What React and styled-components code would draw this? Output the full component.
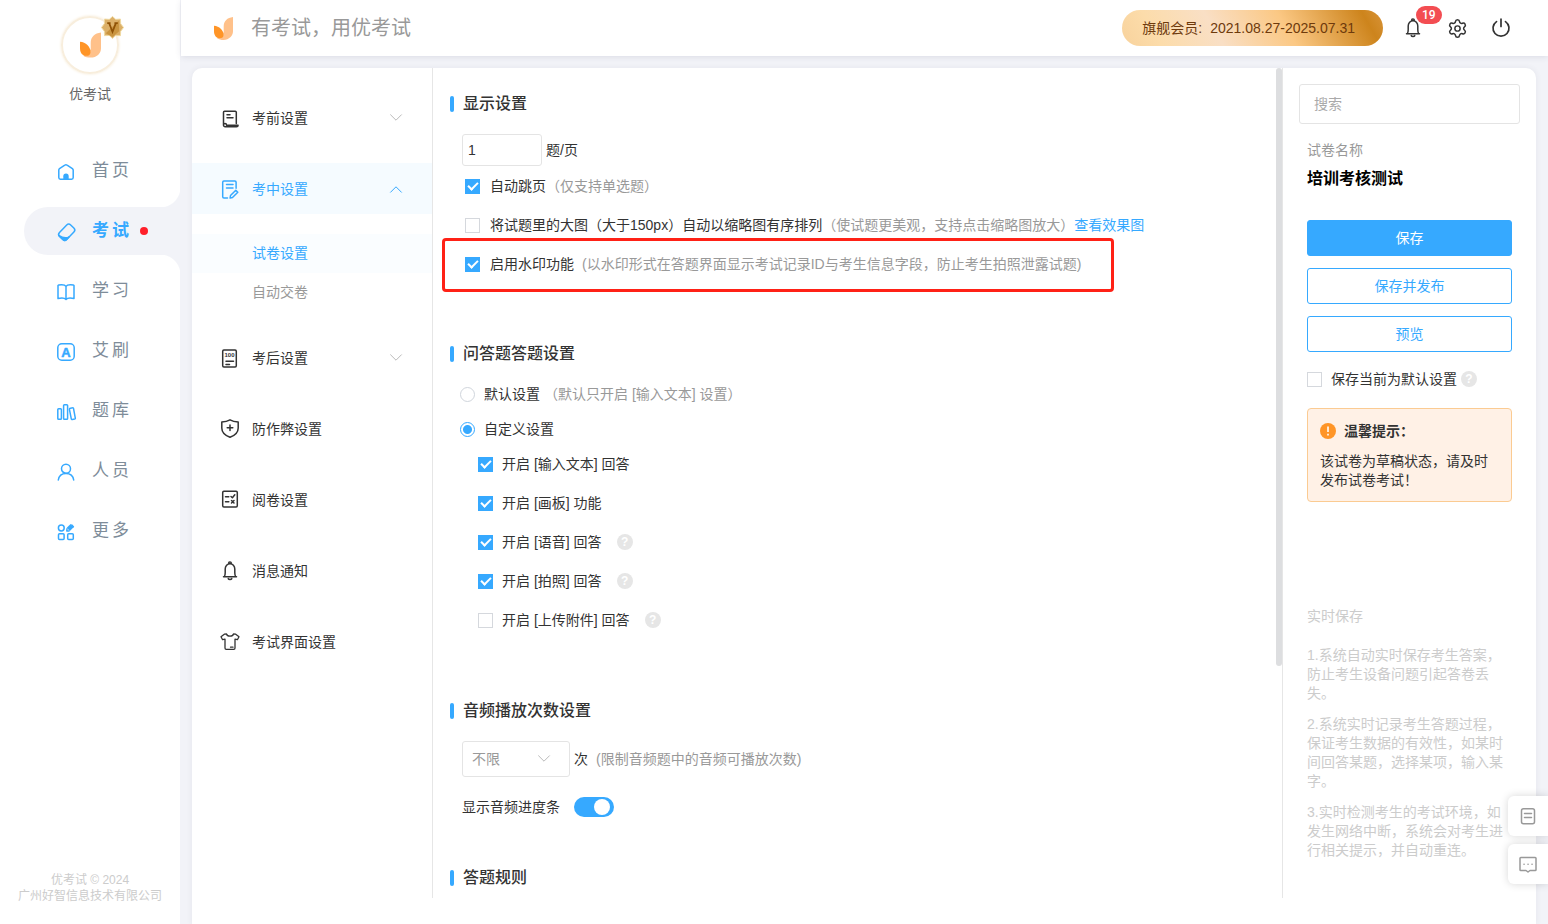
import styled, { createGlobalStyle, css } from 'styled-components';
import { Settings as Gear } from 'lucide-react';

const GlobalStyle = createGlobalStyle`
  * {
    box-sizing: border-box;
  }

  body {
    margin: 0;
    background: #f2f3f8;
    color: #333;
    font-family: 'Liberation Sans', 'Noto Sans CJK SC', sans-serif;
    font-size: 14px;
    line-height: 20px;
  }

  a {
    color: inherit;
    text-decoration: none;
  }

  button,
  input,
  select {
    margin: 0;
    font: inherit;
    color: inherit;
  }

  h1,
  h2,
  h3,
  p {
    margin: 0;
  }

  svg {
    display: block;
    flex-shrink: 0;
    overflow: visible;
  }
`;

const Page = styled.div`
  height: 100vh;
  display: flex;
  overflow: hidden;
`;

const Sidebar = styled.aside`
  width: 180px;
  flex-shrink: 0;
  display: flex;
  flex-direction: column;
  background: #fff;
`;

const Profile = styled.div`
  padding-top: 16px;
  display: flex;
  flex-direction: column;
  align-items: center;
  gap: 10px;
  color: #666;
`;

const Avatar = styled.div`
  width: 58px;
  height: 58px;
  border: 2px solid #f8eedd;
  border-radius: 50%;
  box-shadow: 0 0 2px 1px #fbf5ea;
  display: flex;
  align-items: center;
  justify-content: center;
  position: relative;
`;

const Medal = styled.svg`
  position: absolute;
  top: -2px;
  right: -7px;
`;

const Nav = styled.nav`
  margin-top: 43px;
  display: flex;
  flex-direction: column;
  gap: 12px;
`;

const NavLink = styled.a`
  height: 48px;
  margin-left: 24px;
  padding-left: 33px;
  display: flex;
  align-items: center;
  gap: 15px;
  border-radius: 24px 0 0 24px;
  position: relative;
  color: #7e8c99;
  font-size: 17px;
  letter-spacing: 3px;

  svg {
    color: #36a9ff;
  }

  ${({ $active }) =>
    $active &&
    css`
      background: #f2f3f8;
      color: #36a9ff;
      font-weight: bold;

      &::before,
      &::after {
        content: '';
        position: absolute;
        right: 0;
        width: 20px;
        height: 20px;
      }

      &::before {
        bottom: 100%;
        background: radial-gradient(circle at 0 0, #fff 20px, #f2f3f8 21px);
      }

      &::after {
        top: 100%;
        background: radial-gradient(circle at 0 100%, #fff 20px, #f2f3f8 21px);
      }
    `}
`;

const Dot = styled.i`
  width: 8px;
  height: 8px;
  margin-left: -7px;
  border-radius: 50%;
  background: #ff1f2a;
`;

const Copyright = styled.footer`
  margin-top: auto;
  padding-bottom: 20px;
  text-align: center;
  color: #ccc;
  font-size: 12px;
  line-height: 16px;
`;

const Content = styled.div`
  flex: 1;
  min-width: 0;
  display: flex;
  flex-direction: column;
`;

const Header = styled.header`
  height: 56px;
  margin-left: 1px;
  padding: 0 37px 0 33px;
  flex-shrink: 0;
  display: flex;
  align-items: center;
  background: #fff;
  box-shadow: 0 1px 6px rgba(60, 60, 90, 0.12);
`;

const Slogan = styled.h1`
  margin-left: 18px;
  color: #999;
  font-size: 20px;
  font-weight: normal;
  line-height: 28px;
`;

const Member = styled.div`
  height: 36px;
  margin-left: auto;
  padding: 0 28px 0 20px;
  display: flex;
  align-items: center;
  gap: 8px;
  border-radius: 18px;
  background: linear-gradient(60deg, #f8d29c, #fcdcaa 14%, #f9dfc5 36%, #fbc884 62%, #cd841c 92%, #d8943a);
  color: #6e3a0c;
`;

const HeaderButton = styled.button`
  width: 20px;
  height: 20px;
  margin-left: ${({ $gap }) => $gap || 24}px;
  padding: 0;
  display: flex;
  align-items: center;
  justify-content: center;
  border: 0;
  background: none;
  position: relative;
  color: #333;
  cursor: pointer;
`;

const Badge = styled.span`
  position: absolute;
  left: 13px;
  top: -12px;
  padding: 0 6px;
  border-radius: 9px;
  background: #f34d52;
  color: #fff;
  font-family: Roboto, sans-serif;
  font-size: 12px;
  font-weight: 500;
  line-height: 18px;
`;

const Card = styled.div`
  flex: 1;
  min-height: 0;
  margin: 12px 12px 0 12px;
  padding-bottom: 26px;
  display: flex;
  border-radius: 10px 10px 0 0;
  background: #fff;
  box-shadow: 0 0 6px rgba(60, 60, 90, 0.08);
`;

const Menu = styled.nav`
  width: 241px;
  flex-shrink: 0;
  padding-top: 24px;
  display: flex;
  flex-direction: column;
  gap: 20px;
  border-right: 1px solid #e6e6e6;
`;

const MenuItem = styled.a`
  height: 51px;
  padding: 0 30px 0 28px;
  flex-shrink: 0;
  display: flex;
  align-items: center;
  gap: 12px;
  background: ${({ $active }) => ($active ? '#f5fbff' : 'none')};
  color: ${({ $active }) => ($active ? '#36a9ff' : '#333')};
`;

const Arrow = styled.svg`
  margin-left: auto;
  color: ${({ $active }) => ($active ? '#36a9ff' : '#bbb')};
  transform: ${({ $active }) => ($active ? 'rotate(180deg)' : 'none')};
`;

const SubMenu = styled.div`
  display: flex;
  flex-direction: column;
`;

const SubItem = styled.a`
  height: 39px;
  padding-left: 60px;
  line-height: 39px;
  background: ${({ $active }) => ($active ? '#fafdff' : 'none')};
  color: ${({ $active }) => ($active ? '#36a9ff' : '#999')};
`;

const Settings = styled.main`
  flex: 1;
  min-width: 0;
  padding: 24px 16px 0 17px;
  overflow: hidden;
  border-right: 1px solid #e6e6e6;
  position: relative;
`;

const ScrollThumb = styled.div`
  position: absolute;
  top: 0;
  right: 0;
  width: 6px;
  height: 72%;
  border-radius: 3px;
  background: #dddee0;
`;

const Section = styled.section`
  margin-bottom: ${({ $space }) => $space}px;
`;

const SectionTitle = styled.h2`
  margin-bottom: 18px;
  display: flex;
  align-items: center;
  gap: 9px;
  font-size: 16px;
  font-weight: 500;
  line-height: 24px;

  &::before {
    content: '';
    width: 4px;
    height: 16px;
    border-radius: 2px;
    background: #36a9ff;
  }
`;

const Line = styled.div`
  margin-left: 12px;
  display: flex;
  align-items: center;
  gap: 4px;
`;

const Rows = styled.div`
  margin-top: ${({ $top }) => $top || 0}px;
  margin-left: ${({ $left }) => $left}px;
  display: flex;
  flex-direction: column;
  align-items: flex-start;
  gap: ${({ $gap }) => $gap}px;
`;

const Row = styled.div`
  display: flex;
  align-items: center;
  position: relative;
  white-space: nowrap;
`;

const Choice = styled.label`
  display: flex;
  align-items: center;
  gap: ${({ $gap }) => $gap || 10}px;
`;

const Checkbox = styled.input.attrs({ type: 'checkbox' })`
  appearance: none;
  width: 15px;
  height: 15px;
  flex-shrink: 0;
  border: 1px solid #d5d8dd;
  background: #fff;
  position: relative;

  &:checked {
    border-color: #36a9ff;
    background: #36a9ff;
  }

  &:checked::after {
    content: '';
    box-sizing: border-box;
    position: absolute;
    left: 2px;
    top: 2px;
    width: 10px;
    height: 6px;
    border: solid #fff;
    border-width: 0 0 2px 2px;
    transform: rotate(-45deg);
  }
`;

const Radio = styled.input.attrs({ type: 'radio' })`
  appearance: none;
  width: 15px;
  height: 15px;
  border: 1px solid #d0d5dc;
  border-radius: 50%;
  background: #fff;

  &:checked {
    border-color: #36a9ff;
    background: radial-gradient(circle, #36a9ff 4px, #fff 5px);
  }
`;

const Hint = styled.span`
  margin-left: ${({ $gap }) => $gap || 0}px;
  color: #999;
`;

const PreviewLink = styled.a`
  color: #36a9ff;
`;

const Highlight = styled.div`
  position: absolute;
  top: -16px;
  right: -33px;
  bottom: -18px;
  left: -23px;
  border: 3px solid #ff2116;
  border-radius: 4px;
  pointer-events: none;
`;

const NumberInput = styled.input`
  width: 80px;
  height: 32px;
  padding: 0 5px;
  border: 1px solid #e4e4e4;
  border-radius: 3px;
`;

const SelectBox = styled.div`
  width: 108px;
  height: 36px;
  position: relative;

  svg {
    position: absolute;
    top: 14px;
    right: 20px;
    color: #bbb;
    pointer-events: none;
  }
`;

const Select = styled.select`
  appearance: none;
  width: 100%;
  height: 100%;
  padding: 0 9px;
  border: 1px solid #e4e4e4;
  border-radius: 3px;
  background: #fff;
  color: #999;
`;

const SwitchLine = styled.label`
  margin: 20px 0 0 12px;
  display: flex;
  align-items: center;
  gap: 14px;
`;

const Switch = styled.input.attrs({ type: 'checkbox', role: 'switch' })`
  appearance: none;
  width: 40px;
  height: 20px;
  border-radius: 10px;
  background: #ccc;
  position: relative;

  &::after {
    content: '';
    position: absolute;
    top: 2px;
    left: 2px;
    width: 16px;
    height: 16px;
    border-radius: 50%;
    background: #fff;
  }

  &:checked {
    background: #36a9ff;
  }

  &:checked::after {
    left: 20px;
  }
`;

const Help = styled.span`
  width: 16px;
  height: 16px;
  margin-left: ${({ $gap }) => $gap}px;
  border-radius: 50%;
  background: #e6e6e6;
  color: #fff;
  font-size: 12px;
  font-weight: bold;
  line-height: 16px;
  text-align: center;
`;

const Panel = styled.aside`
  width: 253px;
  flex-shrink: 0;
  padding: 16px 16px 0;
`;

const Search = styled.input`
  width: 100%;
  height: 40px;
  padding: 0 14px;
  display: block;
  border: 1px solid #e4e4e4;
  border-radius: 3px;

  &::placeholder {
    color: #aaa;
  }
`;

const PanelBody = styled.div`
  padding: 16px 8px 0;
`;

const PaperLabel = styled.p`
  color: #999;
`;

const PaperName = styled.h2`
  margin-top: 7px;
  color: #000;
  font-size: 16px;
  line-height: 24px;
`;

const Actions = styled.div`
  margin: 29px 0 17px;
  display: flex;
  flex-direction: column;
  gap: 12px;
`;

const ActionButton = styled.button`
  height: 36px;
  border: 1px solid #36a9ff;
  border-radius: 3px;
  background: ${({ $primary }) => ($primary ? '#36a9ff' : '#fff')};
  color: ${({ $primary }) => ($primary ? '#fff' : '#36a9ff')};
  cursor: pointer;
`;

const Notice = styled.div`
  margin-top: 19px;
  padding: 12px 12px 11px;
  border: 1px solid #fbcb92;
  border-radius: 4px;
  background: #fff1e6;
  line-height: 19px;
`;

const NoticeTitle = styled.h3`
  margin-bottom: 11px;
  display: flex;
  align-items: center;
  gap: 8px;
  font-size: 14px;
  line-height: 20px;
`;

const Tips = styled.div`
  margin-top: 105px;
  display: flex;
  flex-direction: column;
  gap: 12px;
  color: #ccc;
  line-height: 19px;
`;

const TipsTitle = styled.h3`
  margin-bottom: 8px;
  font-size: 14px;
  font-weight: normal;
`;

const FloatBar = styled.div`
  position: fixed;
  right: 0;
  bottom: 40px;
  display: flex;
  flex-direction: column;
  gap: 8px;
`;

const FloatButton = styled.button`
  width: 40px;
  height: 40px;
  padding: 0;
  display: flex;
  align-items: center;
  justify-content: center;
  border: 0;
  border-radius: 6px 0 0 6px;
  background: #fff;
  box-shadow: 0 0 8px rgba(0, 0, 0, 0.16);
  color: #999;
  cursor: pointer;
`;

const Icon = ({ children, size = 20 }) => (
  <svg
    width={size}
    height={size}
    viewBox='0 0 20 20'
    fill='none'
    stroke='currentColor'
    strokeWidth='1.5'
    strokeLinecap='round'
    strokeLinejoin='round'
    aria-hidden='true'
  >
    {children}
  </svg>
);

const Logo = ({ width, height }) => (
  <svg width={width} height={height} viewBox='0 0 20 24' aria-hidden='true'>
    <path d='M20 0C14 .8 10.200 4 10.200 10v6l-7 6.200C5 23.600 7.500 24 10 24c6 0 10-4 10-9z' fill='#ffc18a' />
    <path d='M0 9c5.500.5 10 4.500 10 9.800 0 2.200-1.500 3.500-4 3.500C2 22.300 0 19 0 15z' fill='#ff9527' />
  </svg>
);

const BellIcon = () => (
  <Icon>
    <path d='M3.500 15.800h13M4.300 15.600c.8-1 .9-2.300.9-3.800V8a4.800 5.200 0 0 1 9.600 0v3.800c0 1.500.1 2.800.9 3.800M8.800 2.600v-.8a1.200.8 0 0 1 2.400 0v.8M8.200 17.600a1.900 1.300 0 0 0 3.600 0' />
  </Icon>
);

const Chevron = ({ active }) => (
  <Arrow $active={active} width='12' height='8' viewBox='0 0 12 8' fill='none' stroke='currentColor' aria-hidden='true'>
    <path d='M.3.500L6 6.200 11.700.5' />
  </Arrow>
);

const navItems = [
  {
    label: '首页',
    icon: (
      <>
        <path d='M1.800 9c0-.6.200-1 .7-1.400l5.300-3.500a2 2 0 0 1 2.300 0l5.300 3.500c.5.4.8.8.8 1.400v7.600a1.600 1.600 0 0 1-1.600 1.600H3.400a1.600 1.600 0 0 1-1.600-1.600z' />
        <path d='M6.300 18.200v-3a2.700 2.700 0 0 1 5.400 0v3z' fill='currentColor' stroke='none' />
      </>
    ),
  },
  {
    label: '考试',
    active: true,
    icon: (
      <g transform='translate(9.700 11.200) rotate(-46)'>
        <rect x='-8' y='-5' width='16' height='10' rx='2.800' />
        <path d='M-7.800-3.500V2.800A2.200 2.200 0 0 0-5.600 5h4C-5 4-7 1-7.800-3.500z' fill='currentColor' />
      </g>
    ),
  },
  {
    label: '学习',
    icon: <path d='M1 4.500c.2-.6 6.500-1.500 8 .8 1.500-2.300 7.800-1.400 8-.8V17.500c-2.500-.5-6.500-.8-8 .9-1.500-1.700-5.500-1.400-8-.9zM9 5.300v13' />,
  },
  {
    label: '艾刷',
    icon: (
      <>
        <rect x='.8' y='2.800' width='16.400' height='16.400' rx='4' />
        <text x='9' y='15.500' textAnchor='middle' fontSize='13' fontWeight='bold' letterSpacing='0' fill='currentColor' strokeWidth='.5'>
          A
        </text>
      </>
    ),
  },
  {
    label: '题库',
    icon: (
      <>
        <rect x='.8' y='7.800' width='3.600' height='10.500' rx='.8' />
        <rect x='6.600' y='3.800' width='4' height='14.500' rx='.8' />
        <path d='M12.700 7.400l2.800-.6a.8.8 0 0 1 1 .6l1.800 9.700a.8.8 0 0 1-.6 1l-2.400.4a.8.8 0 0 1-1-.7l-1.900-9.400z' />
      </>
    ),
  },
  {
    label: '人员',
    icon: (
      <>
        <circle cx='9' cy='7.700' r='4.500' />
        <path d='M1.300 19c.6-4 3.500-6.500 7.700-6.500s7.100 2.500 7.700 6.500' />
      </>
    ),
  },
  {
    label: '更多',
    icon: (
      <>
        <circle cx='4.300' cy='7' r='2.900' />
        <rect x='1.500' y='12.800' width='5.600' height='5.600' rx='1' />
        <rect x='10.700' y='12.800' width='5.600' height='5.600' rx='1' />
        <path d='M11.300 8.300l3.800-3.600' strokeWidth='4.500' strokeLinecap='butt' />
        <path d='M10 7.800l-.2 2.300 2.300-.2M14.800 4l1.600 1.700' />
      </>
    ),
  },
];

const menuItems = [
  {
    label: '考前设置',
    arrow: true,
    icon: (
      <path d='M3.500 17.200V4.300c0-.7.400-1.100 1.100-1.100h10.600c.7 0 1.100.4 1.100 1.100v11.200M7 6.800h3M7 9.800h6M5.200 18.800a1.700 1.700 0 0 1-1.700-1.700c0-.9.600-1.600 1.500-1.600s1.500.7 1.500 1.600M5.200 18.800h11.300c1 0 1.600-.6 1.600-1.600H6.500' />
    ),
  },
  {
    label: '考中设置',
    arrow: true,
    active: true,
    icon: (
      <path d='M7.500 19H3.900c-.8 0-1.200-.4-1.200-1.200V3.200C2.700 2.400 3.100 2 3.900 2h11c.8 0 1.200.4 1.200 1.200v6M6.500 5.500h6.500M6.500 9h6.500M10.500 16.500l5.300-5.200 2 2-5.300 5.200-2.400.5z' />
    ),
    children: [{ label: '试卷设置', active: true }, { label: '自动交卷' }],
  },
  {
    label: '考后设置',
    arrow: true,
    icon: (
      <>
        <rect x='2.700' y='2' width='13.600' height='17' rx='1.200' />
        <text x='9.500' y='9.300' textAnchor='middle' fontSize='6' fontWeight='bold' fill='currentColor' stroke='none'>
          100
        </text>
        <path d='M6 13.200h7.500M6 16.400h3.500' />
      </>
    ),
  },
  {
    label: '防作弊设置',
    icon: (
      <path d='M10 .800c2.500 1.400 5 2 8.200 2.300v5.900c0 4-3.200 7.400-8.200 9.200-5-1.800-8.200-5.200-8.200-9.200V3.100C5 2.800 7.500 2.200 10 .8zM10 6v5.600M7.200 8.800h5.600' />
    ),
  },
  {
    label: '阅卷设置',
    icon: (
      <>
        <rect x='2.700' y='1.300' width='14.600' height='15.600' rx='1.200' />
        <path d='M5.500 6.700h3.300M5.500 11.700h3.300M11 6.500l1.400 1.300 2.400-3M11.500 10.500l2.500 2.500M14 10.500l-2.500 2.500' />
      </>
    ),
  },
  { label: '消息通知', bell: true },
  {
    label: '考试界面设置',
    icon: (
      <path
        d='M6.500 2c.8 2.800 6.200 2.800 7 0l2.200.2 3.300 2.600-1.600 2.900-2.400-.6v8.900c0 1-.4 1.400-1.200 1.400H6.200c-.8 0-1.200-.4-1.200-1.400V7.100l-2.400.6L1 4.800l3.300-2.600zM10.500 15.200h2.500'
        strokeWidth='1.300'
      />
    ),
  },
];

const answerOptions = [
  { label: '开启 [输入文本] 回答', checked: true },
  { label: '开启 [画板] 功能', checked: true },
  { label: '开启 [语音] 回答', checked: true, help: true },
  { label: '开启 [拍照] 回答', checked: true, help: true },
  { label: '开启 [上传附件] 回答', help: true },
];

const tips = [
  '1.系统自动实时保存考生答案，防止考生设备问题引起答卷丢失。',
  '2.系统实时记录考生答题过程，保证考生数据的有效性，如某时间回答某题，选择某项，输入某字。',
  '3.实时检测考生的考试环境，如发生网络中断，系统会对考生进行相关提示，并自动重连。',
];

const SideNav = () => (
  <Sidebar>
    <Profile>
      <Avatar>
        <Logo width={21} height={26} />
        <Medal width='23' height='23' viewBox='0 0 24 24' aria-hidden='true'>
          <path
            d='M12 .5l3.300 3 5-.3.200 4.800 3 4-3 4-.2 4.500-5-.2-3.300 3.200-3.300-3.200-5 .2-.2-4.500-3-4 3-4 .2-4.800 5 .3z'
            fill='#dcb068'
            stroke='#efd9a2'
          />
          <path d='M5 18L18.500 5l.5 11-7 6z' fill='#bd8225' opacity='.6' />
          <path d='M6.500 7.500h3.500M14 7.500h3.500M8.500 7.500l3.500 9 3.500-9' fill='none' stroke='#8f5206' strokeWidth='1.800' />
        </Medal>
      </Avatar>
      <span>优考试</span>
    </Profile>
    <Nav>
      {navItems.map((item) => (
        <NavLink key={item.label} href='#' $active={item.active}>
          <Icon>{item.icon}</Icon>
          {item.label}
          {item.active && <Dot />}
        </NavLink>
      ))}
    </Nav>
    <Copyright>
      优考试 © 2024
      <br />
      广州好智信息技术有限公司
    </Copyright>
  </Sidebar>
);

const TopHeader = () => (
  <Header>
    <Logo width={19} height={23} />
    <Slogan>有考试，用优考试</Slogan>
    <Member>
      <span>旗舰会员:</span>
      <span>2021.08.27-2025.07.31</span>
    </Member>
    <HeaderButton $gap={20} aria-label='消息'>
      <BellIcon />
      <Badge>19</Badge>
    </HeaderButton>
    <HeaderButton aria-label='设置'>
      <Gear size={21} strokeWidth={1.7} />
    </HeaderButton>
    <HeaderButton aria-label='退出'>
      <Icon>
        <path d='M10 1.200v7.300M5.500 3.600a8 8 0 1 0 9 0' strokeWidth='1.700' />
      </Icon>
    </HeaderButton>
  </Header>
);

const SettingsMenu = () => (
  <Menu>
    {menuItems.map((item) => [
      <MenuItem key={item.label} href='#' $active={item.active}>
        {item.bell ? <BellIcon /> : <Icon>{item.icon}</Icon>}
        {item.label}
        {item.arrow && <Chevron active={item.active} />}
      </MenuItem>,
      item.children && (
        <SubMenu key={`${item.label}-sub`}>
          {item.children.map((child) => (
            <SubItem key={child.label} href='#' $active={child.active}>
              {child.label}
            </SubItem>
          ))}
        </SubMenu>
      ),
    ])}
  </Menu>
);

const PaperSettings = () => (
  <Settings>
    <Section $space={68}>
      <SectionTitle>显示设置</SectionTitle>
      <Line>
        <NumberInput id='per-page' defaultValue='1' />
        <label htmlFor='per-page'>题/页</label>
      </Line>
      <Rows $top={10} $left={15} $gap={19}>
        <Row>
          <Choice>
            <Checkbox defaultChecked />
            <span>
              自动跳页<Hint>（仅支持单选题）</Hint>
            </span>
          </Choice>
        </Row>
        <Row>
          <Choice>
            <Checkbox />
            <span>
              将试题里的大图（大于150px）自动以缩略图有序排列
              <Hint>（使试题更美观，支持点击缩略图放大）</Hint>
            </span>
          </Choice>
          <PreviewLink href='#'>查看效果图</PreviewLink>
        </Row>
        <Row>
          <Choice>
            <Checkbox defaultChecked />
            <span>
              启用水印功能
              <Hint $gap={8}>(以水印形式在答题界面显示考试记录ID与考生信息字段，防止考生拍照泄露试题)</Hint>
            </span>
          </Choice>
          <Highlight />
        </Row>
      </Rows>
    </Section>

    <Section $space={69}>
      <SectionTitle>问答题答题设置</SectionTitle>
      <Rows $left={10} $gap={15}>
        <Choice $gap={9}>
          <Radio name='answer-mode' />
          <span>
            默认设置
            <Hint $gap={4}>（默认只开启 [输入文本] 设置）</Hint>
          </span>
        </Choice>
        <Choice $gap={9}>
          <Radio name='answer-mode' defaultChecked />
          自定义设置
        </Choice>
      </Rows>
      <Rows $top={15} $left={28} $gap={19}>
        {answerOptions.map((option) => (
          <Row key={option.label}>
            <Choice $gap={9}>
              <Checkbox defaultChecked={option.checked} />
              {option.label}
            </Choice>
            {option.help && <Help $gap={15}>?</Help>}
          </Row>
        ))}
      </Rows>
    </Section>

    <Section $space={49}>
      <SectionTitle>音频播放次数设置</SectionTitle>
      <Line>
        <SelectBox>
          <Select id='audio-times' defaultValue='不限'>
            <option>不限</option>
          </Select>
          <Chevron />
        </SelectBox>
        <label htmlFor='audio-times'>
          次<Hint $gap={8}>(限制音频题中的音频可播放次数)</Hint>
        </label>
      </Line>
      <SwitchLine>
        显示音频进度条
        <Switch defaultChecked />
      </SwitchLine>
    </Section>

    <Section $space={0}>
      <SectionTitle>答题规则</SectionTitle>
    </Section>
    <ScrollThumb />
  </Settings>
);

const SidePanel = () => (
  <Panel>
    <Search type='search' placeholder='搜索' aria-label='搜索' />
    <PanelBody>
      <PaperLabel>试卷名称</PaperLabel>
      <PaperName>培训考核测试</PaperName>
      <Actions>
        <ActionButton $primary>保存</ActionButton>
        <ActionButton>保存并发布</ActionButton>
        <ActionButton>预览</ActionButton>
      </Actions>
      <Row>
        <Choice $gap={9}>
          <Checkbox />
          保存当前为默认设置
        </Choice>
        <Help $gap={4}>?</Help>
      </Row>
      <Notice>
        <NoticeTitle>
          <svg width='16' height='16' viewBox='0 0 16 16' aria-hidden='true'>
            <circle cx='8' cy='8' r='8' fill='#ff9527' />
            <path d='M8 3.500v5.500M8 10.800v1.700' stroke='#fff' strokeWidth='1.600' />
          </svg>
          温馨提示：
        </NoticeTitle>
        <p>该试卷为草稿状态，请及时发布试卷考试！</p>
      </Notice>
      <Tips>
        <TipsTitle>实时保存</TipsTitle>
        {tips.map((tip) => (
          <p key={tip}>{tip}</p>
        ))}
      </Tips>
    </PanelBody>
  </Panel>
);

const App = () => (
  <Page>
    <GlobalStyle />
    <SideNav />
    <Content>
      <TopHeader />
      <Card>
        <SettingsMenu />
        <PaperSettings />
        <SidePanel />
      </Card>
    </Content>
    <FloatBar>
      <FloatButton aria-label='文档'>
        <Icon>
          <rect x='3.500' y='2.800' width='13' height='15' rx='2' />
          <path d='M6.500 7.500h7M6.500 11.500h7' />
        </Icon>
      </FloatButton>
      <FloatButton aria-label='反馈'>
        <Icon>
          <path d='M2.800 3.500h14.400c.5 0 .8.300.8.800v11.400c0 .5-.3.800-.8.800H12l-2 1.500-2-1.500H2.800c-.5 0-.8-.3-.8-.8V4.300c0-.5.300-.8.800-.8zM6 10.200h.1M10 10.200h.1M14 10.200h.1' />
        </Icon>
      </FloatButton>
    </FloatBar>
  </Page>
);

export default App;
